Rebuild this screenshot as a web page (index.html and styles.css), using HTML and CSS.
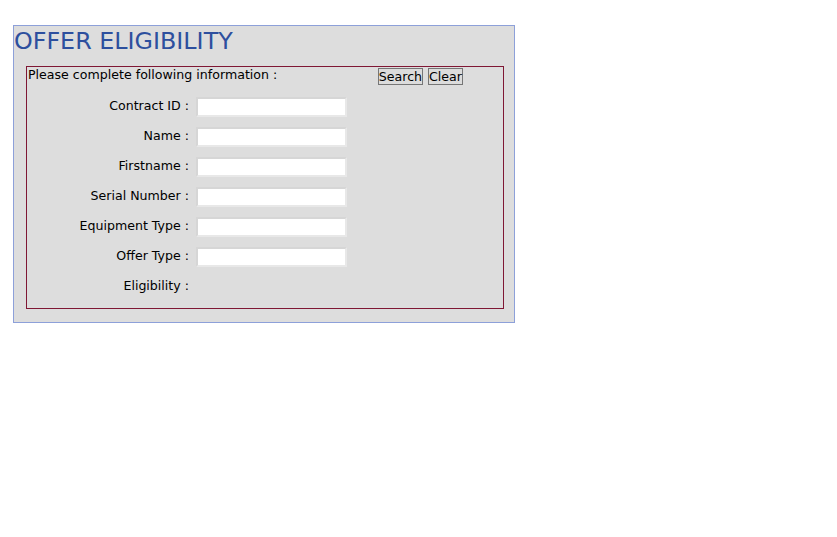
FILE: index.html
```html
<!DOCTYPE html>
<html>
<head>
<meta charset="utf-8">
<link rel="stylesheet" href="styles.css">
</head>
<body>
<div class="panel">
  <h1 class="title">OFFER ELIGIBILITY</h1>
  <div class="box">
    <div class="head">
      <span class="intro">Please complete following information :</span>
      <div class="actions">
        <button class="btn">Search</button>
        <button class="btn">Clear</button>
      </div>
    </div>
    <div class="form">
      <label class="lbl">Contract ID :</label><input class="field" type="text">
      <label class="lbl">Name :</label><input class="field" type="text">
      <label class="lbl">Firstname :</label><input class="field" type="text">
      <label class="lbl">Serial Number :</label><input class="field" type="text">
      <label class="lbl">Equipment Type :</label><input class="field" type="text">
      <label class="lbl">Offer Type :</label><input class="field" type="text">
      <label class="lbl">Eligibility :</label><span class="empty"></span>
    </div>
  </div>
</div>
</body>
</html>
```
FILE: styles.css
```css
html, body {
  margin: 0;
  padding: 0;
  background: #ffffff;
}
body {
  padding: 25px 0 0 13px;
  font-family: "DejaVu Sans", Tahoma, sans-serif;
  font-size: 12.6px;
  color: #000;
}
.panel {
  width: 500px;
  height: 296px;
  border: 1px solid #8da0d9;
  background: #dddddd;
  box-sizing: content-box;
}
.title {
  margin: 0;
  height: 38px;
  padding: 2px 0 0 0;
  font-size: 23.8px;
  font-weight: normal;
  line-height: 27px;
  color: #2d4f9e;
}
.box {
  margin: 0 10px 0 12px;
  height: 241px;
  border: 1px solid #7f1734;
}
.head {
  display: flex;
  align-items: flex-start;
  height: 30px;
}
.intro {
  padding: 0 0 0 1px;
  line-height: 15px;
}
.actions {
  margin-left: auto;
  margin-right: 40px;
  display: flex;
  gap: 5px;
  padding-top: 1px;
}
.btn {
  font-family: "DejaVu Sans", Tahoma, sans-serif;
  font-size: 12.6px;
  margin: 0;
  padding: 0;
  height: 17px;
  line-height: 15px;
  border: 1px solid #767676;
  background: #dcdcdc;
  color: #000;
}
.form {
  display: grid;
  grid-template-columns: 162px 151px;
  column-gap: 7px;
  row-gap: 10px;
  grid-auto-rows: 20px;
  align-items: center;
}
.lbl {
  text-align: right;
  line-height: 15px;
  padding-bottom: 3px;
}
.field {
  margin: 0;
  width: 151px;
  height: 20px;
  box-sizing: border-box;
  border: 2px solid #d6d6d6;
  border-right-color: #e8e8e8;
  border-bottom-color: #e8e8e8;
  background: #fff;
  padding: 0 2px;
}
```
